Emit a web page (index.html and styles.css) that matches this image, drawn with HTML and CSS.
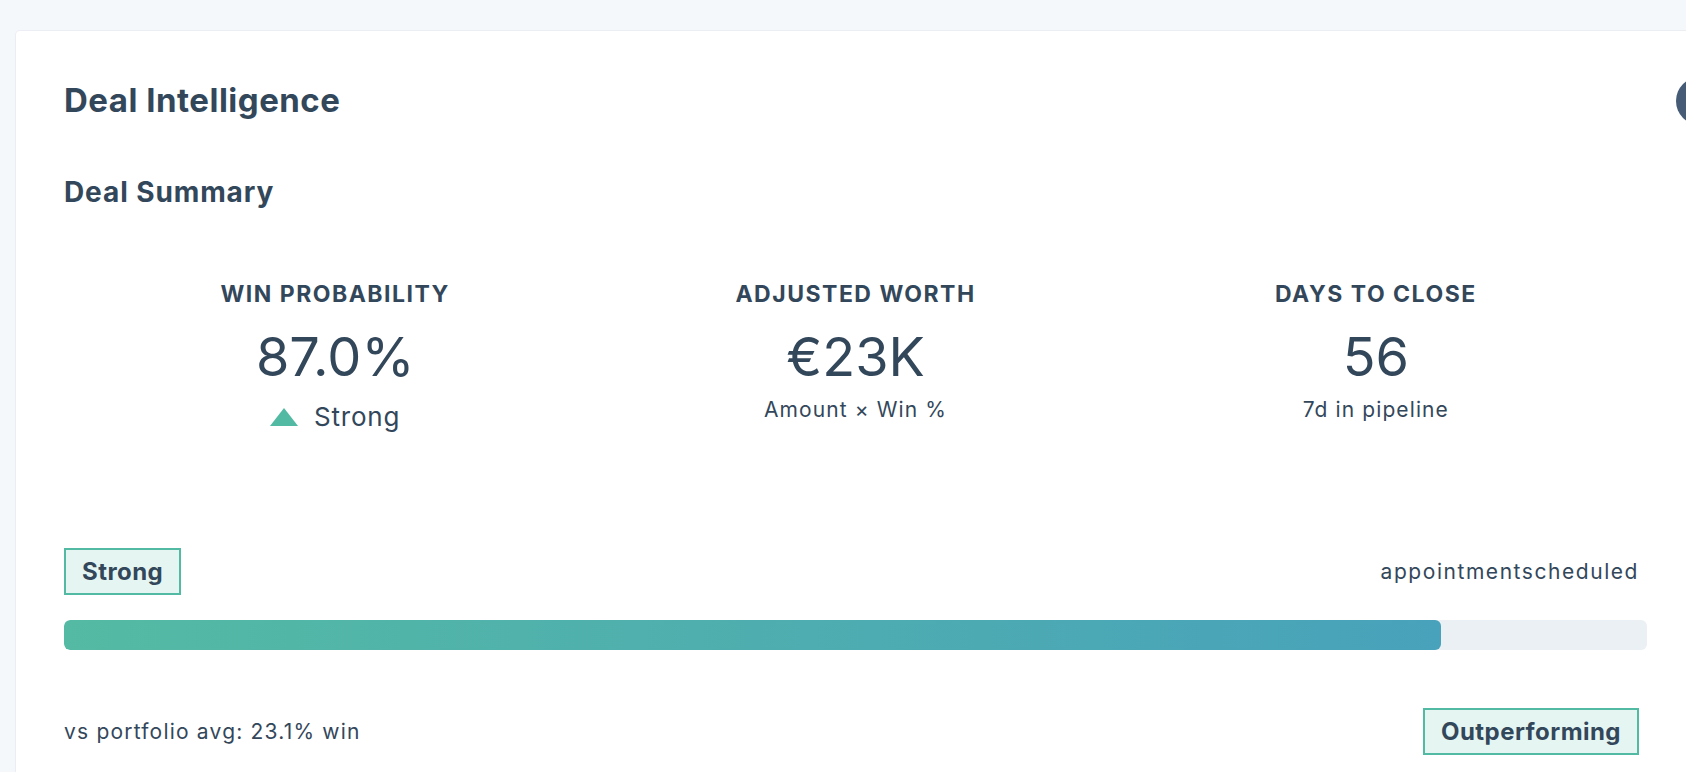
FILE: index.html
```html
<!DOCTYPE html>
<html lang="en">
<head>
<meta charset="utf-8">
<title>Deal Intelligence</title>
<link rel="stylesheet" href="styles.css">
</head>
<body>
<div class="page">
  <section class="card">
    <h1 class="title">Deal Intelligence</h1>
    <h2 class="subtitle">Deal Summary</h2>

    <div class="stats">
      <div class="stat">
        <div class="stat-label">WIN PROBABILITY</div>
        <div class="stat-value">87.0%</div>
        <div class="stat-trend">
          <svg class="tri" width="28" height="18" viewBox="0 0 28 18" aria-hidden="true"><polygon points="14,0 28,18 0,18"/></svg>
          <span>Strong</span>
        </div>
      </div>
      <div class="stat">
        <div class="stat-label">ADJUSTED WORTH</div>
        <div class="stat-value">€23K</div>
        <div class="stat-sub">Amount × Win %</div>
      </div>
      <div class="stat">
        <div class="stat-label">DAYS TO CLOSE</div>
        <div class="stat-value">56</div>
        <div class="stat-sub">7d in pipeline</div>
      </div>
    </div>

    <div class="row row-top">
      <span class="badge">Strong</span>
      <span class="text text-wide">appointmentscheduled</span>
    </div>

    <div class="bar"><div class="bar-fill" style="width:87%"></div></div>

    <div class="row row-bottom">
      <span class="text">vs portfolio avg: 23.1% win</span>
      <span class="badge">Outperforming</span>
    </div>
  </section>
  <div class="fab" aria-hidden="true"></div>
</div>
</body>
</html>
```

FILE: styles.css
```css
* { box-sizing: border-box; }

html, body {
  margin: 0;
  padding: 0;
  overflow: hidden;
  background: #f5f8fa;
}

body {
  font-family: Inter, "Noto Sans", "Liberation Sans", sans-serif;
  color: #33475b;
}

.page {
  position: relative;
  padding: 31px 0 0 16px;
  width: 1686px;
  height: 772px;
}

.card {
  width: 1679px;
  background: #ffffff;
  border-radius: 4px 0 0 0;
  box-shadow: 0 0 0 1px rgba(223, 227, 235, 0.45), 0 1px 2px rgba(0, 0, 0, 0.03);
  padding: 49px 48px 48px 48px;
}

.title {
  margin: 0;
  font-size: 33px;
  line-height: 40px;
  font-weight: 700;
  letter-spacing: 0.5px;
}

.subtitle {
  margin: 55px 0 0 0;
  font-size: 28px;
  line-height: 34px;
  font-weight: 700;
  letter-spacing: 0.9px;
}

.stats {
  margin-top: 71px;
  display: grid;
  grid-template-columns: repeat(3, 1fr);
  padding: 0 11px;
  align-items: start;
}

.stat {
  display: flex;
  flex-direction: column;
  align-items: center;
  text-align: center;
}

.stat-label {
  font-size: 23px;
  line-height: 28px;
  font-weight: 700;
  letter-spacing: 1.5px;
}

.stat-value {
  margin-top: 17px;
  font-size: 54px;
  line-height: 64px;
  font-weight: 400;
  letter-spacing: 0;
}

.stat-sub {
  margin-top: 8px;
  font-size: 21px;
  line-height: 26px;
  letter-spacing: 1.1px;
}

.stat-trend {
  margin-top: 8px;
  display: flex;
  align-items: center;
  gap: 16px;
  font-size: 26px;
  line-height: 40px;
  letter-spacing: 0.8px;
}

.tri { display: block; fill: #52b9a3; }

.row {
  display: flex;
  align-items: center;
  justify-content: space-between;
  padding-right: 8px;
}

.row-top { margin-top: 111px; }
.row-bottom { margin-top: 58px; }

.badge {
  display: inline-block;
  border: 2px solid #52b9a3;
  background: #e5f5f2;
  padding: 8px 16px;
  font-size: 24px;
  line-height: 27px;
  font-weight: 700;
  letter-spacing: 0.45px;
}

.text {
  font-size: 21px;
  line-height: 26px;
  letter-spacing: 1.2px;
}

.text-wide { letter-spacing: 1.55px; }

.bar {
  margin-top: 25px;
  height: 30px;
  border-radius: 6px;
  background: #eaf0f4;
  overflow: hidden;
}

.bar-fill {
  height: 100%;
  border-radius: 6px;
  background: linear-gradient(90deg, #54baa3 0%, #48a2bb 100%);
}

.fab {
  position: absolute;
  left: 1676px;
  top: 77px;
  width: 48px;
  height: 48px;
  border-radius: 50%;
  background: #455b76;
}
```
